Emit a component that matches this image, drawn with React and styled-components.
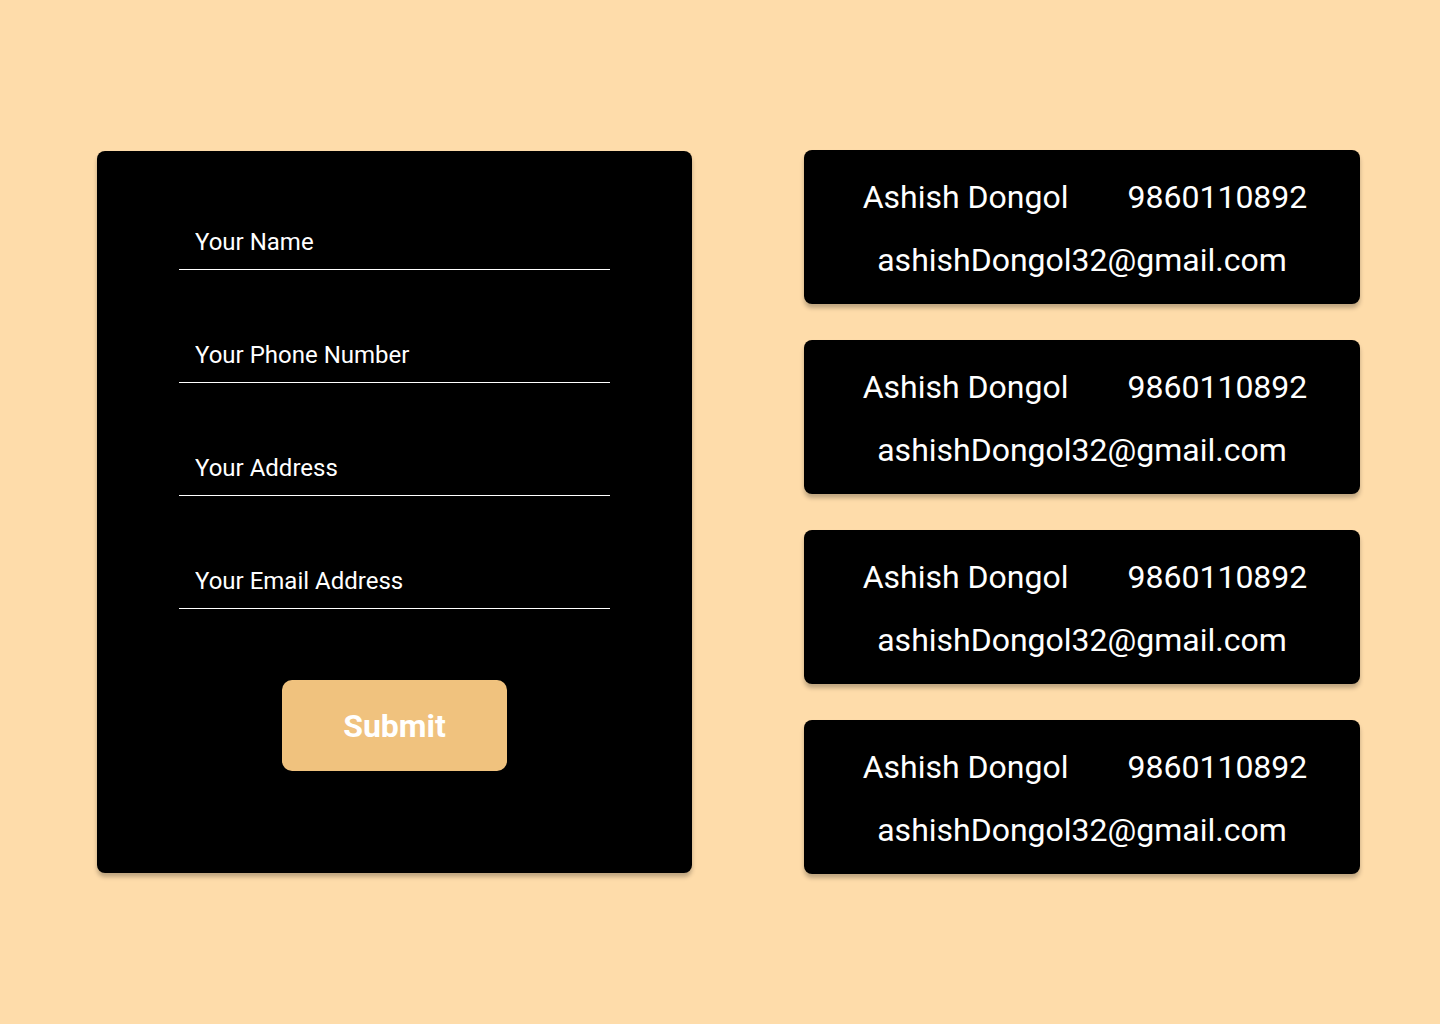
import React from "react";
import styled, { createGlobalStyle } from "styled-components";

const GlobalStyle = createGlobalStyle`
  * { box-sizing: border-box; }
  html, body { margin: 0; padding: 0; }
  body {
    background: #fedcaa;
    font-family: Roboto, "Noto Sans", "Liberation Sans", sans-serif;
    min-height: 1024px;
  }
`;

const Page = styled.main`
  display: flex;
  align-items: center;
  gap: 112px;
  padding: 150px 0 0 97px;
`;

const FormCard = styled.form`
  width: 595px;
  height: 722px;
  background: #000;
  border-radius: 8px;
  box-shadow: 0 4px 4px rgba(0, 0, 0, 0.25);
  display: flex;
  flex-direction: column;
  padding: 71px 82px 0;
`;

const Field = styled.input`
  display: block;
  width: 100%;
  height: 48px;
  margin-bottom: ${(p) => (p.$last ? "71px" : "65px")};
  padding: 0 16px 8px;
  background: transparent;
  border: none;
  border-bottom: 1px solid #fff;
  outline: none;
  color: #fff;
  font-family: Roboto, "Liberation Sans", sans-serif;
  font-size: 24px;
  &::placeholder {
    color: #fff;
    opacity: 1;
  }
`;

const SubmitButton = styled.button`
  align-self: center;
  width: 225px;
  height: 91px;
  border: none;
  border-radius: 10px;
  background: #f0c27e;
  color: #fff;
  font-family: Roboto, "Liberation Sans", sans-serif;
  font-weight: 700;
  font-size: 32px;
  cursor: pointer;
`;

const CardList = styled.section`
  display: flex;
  flex-direction: column;
  gap: 36px;
`;

const ContactCard = styled.article`
  width: 556px;
  height: 154px;
  background: #000;
  border-radius: 8px;
  box-shadow: 0 4px 4px rgba(0, 0, 0, 0.25);
  color: #fff;
  display: flex;
  flex-direction: column;
  align-items: center;
  gap: 25px;
  padding: 28px 0 25px;
  font-size: 32px;
  line-height: 38px;
`;

const TopRow = styled.div`
  display: flex;
  justify-content: center;
  gap: 59px;
  margin-left: 6px;
`;

const contacts = Array.from({ length: 4 }, () => ({
  name: "Ashish Dongol",
  phone: "9860110892",
  email: "ashishDongol32@gmail.com",
}));

export default function App() {
  return (
    <>
      <GlobalStyle />
      <Page>
        <FormCard onSubmit={(e) => e.preventDefault()}>
          <Field placeholder="Your Name" />
          <Field placeholder="Your Phone Number" />
          <Field placeholder="Your Address" />
          <Field placeholder="Your Email Address" $last />
          <SubmitButton type="submit">Submit</SubmitButton>
        </FormCard>
        <CardList>
          {contacts.map((c, i) => (
            <ContactCard key={i}>
              <TopRow>
                <span>{c.name}</span>
                <span>{c.phone}</span>
              </TopRow>
              <div>{c.email}</div>
            </ContactCard>
          ))}
        </CardList>
      </Page>
    </>
  );
}
